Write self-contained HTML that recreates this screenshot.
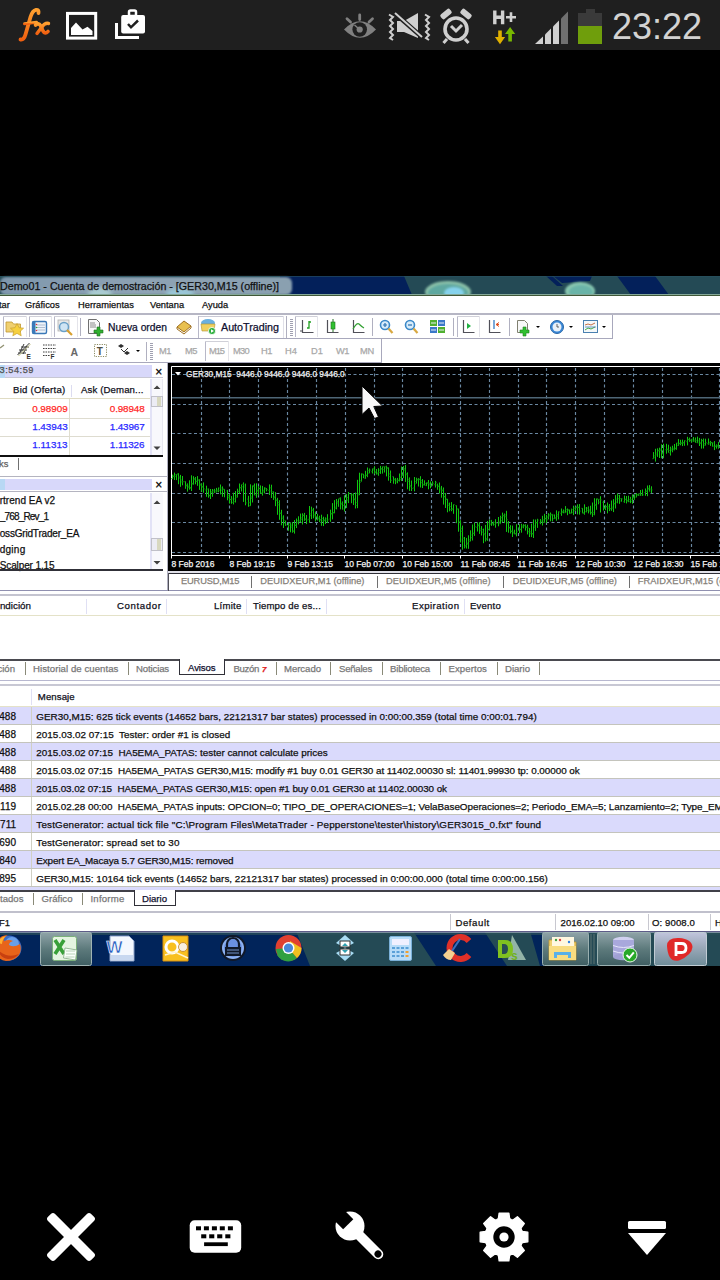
<!DOCTYPE html>
<html><head><meta charset="utf-8">
<style>
*{margin:0;padding:0;box-sizing:border-box}
html,body{width:720px;height:1280px;background:#000;overflow:hidden;font-family:"Liberation Sans",sans-serif}
.a{position:absolute}
.t{position:absolute;white-space:pre;line-height:1;-webkit-text-stroke:0.25px currentColor}
svg{position:absolute;overflow:visible}
#sb{position:absolute;left:0;top:0;width:720px;height:50px;background:#1f1f1f}
</style></head><body>
<div id="sb" class="a">
<svg width="720" height="50" style="position:absolute;left:0;top:0">
 <defs><linearGradient id="fxg" x1="0" y1="0" x2="0" y2="1"><stop offset="0" stop-color="#ffa030"/><stop offset="1" stop-color="#f06010"/></linearGradient></defs>
 <path d="M38.5 13 Q39 9.5 36 9.8 Q32.5 10.5 30.5 17 L25.5 34.5 Q24 40 20.5 39.5" fill="none" stroke="url(#fxg)" stroke-width="3.8" stroke-linecap="round"/>
 <path d="M24.5 23.8 L36.5 22.3" stroke="url(#fxg)" stroke-width="3" stroke-linecap="round"/>
 <path d="M35.5 25 Q38.5 22.5 40.5 25.5 L43 31 Q45 34.5 48 31.5" fill="none" stroke="url(#fxg)" stroke-width="3.6" stroke-linecap="round"/>
 <path d="M48.5 23.5 Q45 22.5 41.5 27.5 L37 33.5" fill="none" stroke="url(#fxg)" stroke-width="3.4" stroke-linecap="round"/>
 <rect x="67.5" y="13.4" width="28.2" height="24.7" fill="none" stroke="#fff" stroke-width="3"/>
 <path d="M71 35 L71 28 L76 22.5 L82.5 29.5 L87.5 26.8 L92.5 31 L92.5 35 Z" fill="#fff"/>
 <path d="M116.5 23 L116.5 37.5 L139 37.5" fill="none" stroke="#fff" stroke-width="3"/>
 <rect x="121.2" y="15" width="23.8" height="18.5" rx="2" fill="#fff"/>
 <rect x="129" y="10.5" width="7" height="5.5" rx="1.5" fill="none" stroke="#fff" stroke-width="2.5"/>
 <path d="M128 24 L131 27.3 L138 20.5" fill="none" stroke="#1f1f1f" stroke-width="2.5"/>
 <!-- eye -->
 <path d="M344 29.5 Q360 13 376 29.5 Q360 46 344 29.5 Z" fill="#808080"/>
 <path d="M359.7 15 V19.5 M347 18.8 L350.5 22 M372.5 18.8 L369 22" stroke="#808080" stroke-width="2.8" stroke-linecap="round"/>
 <circle cx="359.7" cy="29.5" r="7.3" fill="#1f1f1f"/>
 <circle cx="359.7" cy="29.5" r="3.1" fill="#808080"/>
 <path d="M359.7 29.5 L354.5 25" stroke="#808080" stroke-width="1.5"/>
 <!-- mute vibrate -->
 <g fill="none" stroke="#cfcfcf" stroke-width="2">
  <path d="M389 14.5 l4 2.5 l-3 3 l3 3 l-3 3 l3 3 l-3 3 l3 3 l-3 3 l3 2"/>
  <path d="M425 14.5 l4 2.5 l-3 3 l3 3 l-3 3 l3 3 l-3 3 l3 3 l-3 3 l3 2"/>
 </g>
 <path d="M397 21 L404 21 L418 13 L418 38 L404 32 L397 32 Z" fill="#cfcfcf"/>
 <path d="M394 12.5 L423 38" stroke="#1f1f1f" stroke-width="4.5"/>
 <path d="M395 13 L422 37" stroke="#cfcfcf" stroke-width="2"/>
 <!-- alarm -->
 <circle cx="456" cy="29" r="11" fill="none" stroke="#cfcfcf" stroke-width="3.6"/>
 <rect x="-6" y="-3" width="12" height="6" rx="2" fill="#cfcfcf" transform="translate(446 14) rotate(-40)"/>
 <rect x="-6" y="-3" width="12" height="6" rx="2" fill="#cfcfcf" transform="translate(466 14) rotate(40)"/>
 <path d="M451 26 L456 31 L462 25" fill="none" stroke="#cfcfcf" stroke-width="3"/>
 <path d="M447 39 l-3.5 4 M465 39 l3.5 4" stroke="#cfcfcf" stroke-width="3"/>
 <!-- H+ -->
 <path d="M494.8 10.5 V24.3 M502.6 10.5 V24.3 M494.8 17.3 H502.6" stroke="#d0d0d0" stroke-width="3.4"/>
 <path d="M506 17.2 H516 M511 12.3 V22.1" stroke="#d0d0d0" stroke-width="2.6"/>
 <path d="M498.2 30.5 h3.6 v6.5 h3.3 l-5.1 7.3 l-5.1 -7.3 h3.3z" fill="#e0b000"/>
 <path d="M508.3 41.5 h3.6 v-7.5 h3.3 l-5.1 -7 l-5.1 7 h3.3z" fill="#78b800"/>
 <!-- signal -->
 <path d="M535 44 L543 36.5 L543 44 Z" fill="#d0d0d0"/>
 <path d="M545 44 L545 34.5 L551 28.5 L551 44 Z" fill="#d0d0d0"/>
 <path d="M553 44 L553 26.5 L559 20.5 L559 44 Z" fill="#d0d0d0"/>
 <path d="M561 44 L561 18.5 L568 11.5 L568 44 Z" fill="#707070"/>
 <!-- battery -->
 <rect x="586" y="9" width="9" height="4" fill="#3a3a3a"/>
 <rect x="578" y="13" width="24" height="13" fill="#3a3a3a"/>
 <rect x="578" y="26" width="24" height="18" fill="#6f9e0c"/>
</svg>
<div class="t" style="left:612px;top:8.5px;font-size:36px;color:#d2d2d2;-webkit-text-stroke:0">23:22</div>
</div>
<div class="a" style="left:0px;top:276px;width:720px;height:690px;background:#fff;"></div>
<svg style="left:0;top:276px" width="720" height="20" viewBox="0 276 720 20">
<defs>
 <filter id="bl1" x="-50%" y="-50%" width="200%" height="200%"><feGaussianBlur stdDeviation="2"/></filter>
 <filter id="bl2" x="-50%" y="-50%" width="200%" height="200%"><feGaussianBlur stdDeviation="1"/></filter>
 <linearGradient id="tg" x1="0" y1="0" x2="1" y2="0">
  <stop offset="0" stop-color="#7f97ad"/><stop offset="0.5" stop-color="#8ea3b4"/><stop offset="1" stop-color="#8aa0b0"/>
 </linearGradient>
</defs>
<rect x="0" y="276" width="720" height="20" fill="#244a55"/>
<path d="M280 276 L404 276 L412 295 L280 295 Z" fill="#03205a"/>
<path d="M546 276 L552 276 L563 286 L557 286 Z" fill="#03205a"/>
<path d="M553 276 L592 276 L590 281 L562 283 Z" fill="#03205a"/>
<path d="M617 276 L655 276 L669 295 L631 295 Z" fill="#03205a"/>
<rect x="0" y="277" width="292" height="18" rx="6" fill="url(#tg)" filter="url(#bl2)"/>
<ellipse cx="448" cy="292" rx="23" ry="11" fill="#8ac0a8" filter="url(#bl2)"/><ellipse cx="448" cy="293" rx="20" ry="9" fill="#5ea8a0" filter="url(#bl2)"/>
<ellipse cx="454" cy="293" rx="10" ry="6" fill="#86d2ec" filter="url(#bl2)"/>
<ellipse cx="580" cy="291" rx="15" ry="9" fill="#8ac8b0" filter="url(#bl2)"/><ellipse cx="581" cy="292" rx="12" ry="7" fill="#6ab4a8" filter="url(#bl2)"/>
<ellipse cx="100" cy="294" rx="12" ry="6" fill="#b8e0e0" opacity="0.7" filter="url(#bl1)"/>
<ellipse cx="180" cy="294" rx="14" ry="6" fill="#a0d8e8" opacity="0.7" filter="url(#bl1)"/>
<rect x="0" y="276" width="720" height="1" fill="#2a5460" opacity="0.6"/>
<rect x="0" y="294" width="720" height="1" fill="#84a898"/><rect x="0" y="295" width="720" height="1" fill="#405838"/>
</svg>
<div class="t" style="left:0.0px;top:280.8px;font-size:10.69px;color:#101010;">Demo01 - Cuenta de demostración - [GER30,M15 (offline)]</div>
<div class="a" style="left:0px;top:296px;width:720px;height:18px;background:#fff;"></div>
<div class="t" style="left:-1.0px;top:300.5px;font-size:9.30px;color:#101010;">tar</div>
<div class="t" style="left:25.0px;top:300.5px;font-size:9.30px;color:#101010;">Gráficos</div>
<div class="t" style="left:78.0px;top:300.5px;font-size:9.30px;color:#101010;">Herramientas</div>
<div class="t" style="left:150.0px;top:300.5px;font-size:9.30px;color:#101010;">Ventana</div>
<div class="t" style="left:202.0px;top:300.5px;font-size:9.30px;color:#101010;">Ayuda</div>
<div class="a" style="left:0px;top:313px;width:720px;height:2px;background:#b6b6c4;"></div>
<div class="a" style="left:0px;top:338px;width:612px;height:1px;background:#a8a8bc;"></div>
<div class="a" style="left:612px;top:315px;width:1px;height:24px;background:#a8a8bc;"></div>
<div class="a" style="left:3px;top:316px;width:1px;height:21px;background:#b8b8c8;"></div>
<div class="a" style="left:3px;top:316px;width:23px;height:1px;background:#d0d0d8;"></div>
<div class="a" style="left:26px;top:316px;width:1px;height:21px;background:#e4e4ea;"></div>
<div class="a" style="left:29px;top:316px;width:1px;height:21px;background:#b8b8c8;"></div>
<div class="a" style="left:29px;top:316px;width:22px;height:1px;background:#d0d0d8;"></div>
<div class="a" style="left:51px;top:316px;width:1px;height:21px;background:#e4e4ea;"></div>
<div class="a" style="left:54px;top:316px;width:1px;height:21px;background:#b8b8c8;"></div>
<div class="a" style="left:54px;top:316px;width:23px;height:1px;background:#d0d0d8;"></div>
<div class="a" style="left:77px;top:316px;width:1px;height:21px;background:#e4e4ea;"></div>
<div class="a" style="left:295px;top:316px;width:1px;height:21px;background:#b8b8c8;"></div>
<div class="a" style="left:295px;top:316px;width:22px;height:1px;background:#d0d0d8;"></div>
<div class="a" style="left:317px;top:316px;width:1px;height:21px;background:#e4e4ea;"></div>
<div class="a" style="left:457px;top:316px;width:1px;height:21px;background:#b8b8c8;"></div>
<div class="a" style="left:457px;top:316px;width:22px;height:1px;background:#d0d0d8;"></div>
<div class="a" style="left:479px;top:316px;width:1px;height:21px;background:#e4e4ea;"></div>
<div class="a" style="left:80px;top:318px;width:1px;height:18px;background:#b0b0c0;"></div>
<div class="a" style="left:372px;top:318px;width:1px;height:18px;background:#b0b0c0;"></div>
<div class="a" style="left:453px;top:318px;width:1px;height:18px;background:#b0b0c0;"></div>
<div class="a" style="left:509px;top:318px;width:1px;height:18px;background:#b0b0c0;"></div>
<div class="a" style="left:286px;top:316px;width:1px;height:22px;background:#b0b0c0;"></div>
<div class="a" style="left:290px;top:319px;width:3px;height:1px;background:#a0a0b0;"></div>
<div class="a" style="left:290px;top:321px;width:3px;height:1px;background:#a0a0b0;"></div>
<div class="a" style="left:290px;top:323px;width:3px;height:1px;background:#a0a0b0;"></div>
<div class="a" style="left:290px;top:325px;width:3px;height:1px;background:#a0a0b0;"></div>
<div class="a" style="left:290px;top:327px;width:3px;height:1px;background:#a0a0b0;"></div>
<div class="a" style="left:290px;top:329px;width:3px;height:1px;background:#a0a0b0;"></div>
<div class="a" style="left:290px;top:331px;width:3px;height:1px;background:#a0a0b0;"></div>
<div class="a" style="left:290px;top:333px;width:3px;height:1px;background:#a0a0b0;"></div>
<div class="a" style="left:290px;top:335px;width:3px;height:1px;background:#a0a0b0;"></div>
<div class="a" style="left:198px;top:316px;width:86px;height:1px;background:#c8c8d4;"></div>
<div class="a" style="left:198px;top:316px;width:1px;height:22px;background:#b8b8c8;"></div>
<div class="a" style="left:283px;top:316px;width:1px;height:22px;background:#e0e0e8;"></div>
<div class="t" style="left:108.0px;top:322.6px;font-size:10.30px;color:#101030;">Nueva orden</div>
<div class="t" style="left:221.0px;top:322.4px;font-size:10.72px;color:#101030;">AutoTrading</div>
<svg style="left:0;top:0" width="720" height="1280">
<!-- folder star -->
<path d="M6 322 h6 l1.5 2 h7 v8 h-14.5z" fill="#f0d070" stroke="#c09830" stroke-width="0.8"/>
<path d="M17 323.5 l2 4.2 4.6 .5 -3.4 3.1 1 4.5 -4.2 -2.4 -4.2 2.4 1 -4.5 -3.4 -3.1 4.6 -.5z" fill="#f6d040" stroke="#c8a030" stroke-width="0.7"/>
<!-- market watch -->
<rect x="32.5" y="321.5" width="14" height="12" rx="1.5" fill="#eef4fa" stroke="#3a78b8" stroke-width="1.4"/>
<rect x="32.5" y="321.5" width="3" height="12" fill="#3a78b8"/>
<path d="M37 325 h8 M37 327.5 h8 M37 330 h8" stroke="#a0b0c8" stroke-width="0.8"/>
<circle cx="36.5" cy="324.5" r="0.8" fill="#e03030"/><circle cx="36.5" cy="327.5" r="0.8" fill="#30a030"/><circle cx="36.5" cy="330.5" r="0.8" fill="#e03030"/>
<!-- magnifier -->
<rect x="58" y="320" width="11" height="11" fill="#e8e8e8" stroke="#b0b0b0" stroke-width="0.8"/>
<circle cx="64" cy="327" r="4.5" fill="#cfe4f4" stroke="#6aa0c8" stroke-width="1.5"/>
<path d="M67 330 l5 5" stroke="#d8a030" stroke-width="2.2"/>
<!-- new order doc -->
<path d="M88.5 319.5 h8 l3 3 v11 h-11z" fill="#f8f8f8" stroke="#707070" stroke-width="1"/>
<path d="M90 323 h5 M90 325 h6 M90 327 h6" stroke="#707070" stroke-width="0.8"/>
<path d="M97 327 h3 v3 h3 v3 h-3 v3 h-3 v-3 h-3 v-3 h3z" fill="#30b030" stroke="#207020" stroke-width="0.6"/>
<!-- gold book -->
<path d="M177 327 l7 -6 l7 5 l-7 6z" fill="#e8c050" stroke="#a07020" stroke-width="1"/>
<path d="M177 327 l0 2 l7 5 l7 -6 v-2" fill="none" stroke="#a07020" stroke-width="1"/>
<!-- autotrading icon -->
<ellipse cx="208" cy="323" rx="7" ry="4" fill="#6ab0e0"/>
<path d="M201 324 h14 l-1 7 h-12z" fill="#f0d060" stroke="#b09030" stroke-width="0.6"/>
<circle cx="212" cy="331" r="3.6" fill="#30b040" stroke="#fff" stroke-width="0.8"/>
<path d="M211 329.3 l3 1.7 l-3 1.7z" fill="#fff"/>
<!-- bar chart -->
<path d="M302.5 320 v12.5 h11 M300 331 h3" stroke="#505058" stroke-width="1.2" fill="none"/>
<path d="M309 321 v7 h-2 M309 322 h2" stroke="#20a020" stroke-width="1.3" fill="none"/>
<!-- candle -->
<path d="M327.5 320 v12.5 h11" stroke="#505058" stroke-width="1.2" fill="none"/>
<path d="M333 319 v13" stroke="#207020" stroke-width="1"/>
<rect x="331" y="322" width="4" height="7" fill="#30c030" stroke="#207020" stroke-width="0.6"/>
<!-- line chart -->
<path d="M353.5 320 v12.5 h11" stroke="#505058" stroke-width="1.2" fill="none"/>
<path d="M353 329 q4 -7 6 -5 q3 3 5 4" stroke="#30a030" stroke-width="1.2" fill="none"/>
<!-- zoom in / out -->
<circle cx="385" cy="325" r="4.5" fill="#d8ecfa" stroke="#3a88c8" stroke-width="1.6"/>
<path d="M383 325 h4 M385 323 v4" stroke="#2a70b0" stroke-width="1.2"/>
<path d="M388.5 328.5 l4 4.5" stroke="#d8a840" stroke-width="2.2"/>
<circle cx="410" cy="325" r="4.5" fill="#d8ecfa" stroke="#3a88c8" stroke-width="1.6"/>
<path d="M408 325 h4" stroke="#2a70b0" stroke-width="1.2"/>
<path d="M413.5 328.5 l4 4.5" stroke="#d8a840" stroke-width="2.2"/>
<!-- tile -->
<rect x="430" y="320" width="7" height="6" fill="#50b030"/><rect x="438" y="320" width="7" height="6" fill="#3a78c8"/>
<rect x="430" y="327" width="7" height="6" fill="#3a78c8"/><rect x="438" y="327" width="7" height="6" fill="#50b030"/>
<path d="M431 323 h5 M439 323 h5 M431 330 h5 M439 330 h5" stroke="#e8f0f8" stroke-width="1"/>
<!-- auto scroll -->
<path d="M463.5 320 v12.5 h11" stroke="#505058" stroke-width="1.2" fill="none"/>
<path d="M467 323 l4 3 l-4 3z" fill="#20b040"/>
<!-- chart shift -->
<path d="M489.5 320 v12.5 h11" stroke="#505058" stroke-width="1.2" fill="none"/>
<path d="M494 320 v9" stroke="#2070c0" stroke-width="1.2"/>
<path d="M499 324.5 l-3 0 m3 -2 l-3 2 l3 2" stroke="#e05020" stroke-width="1" fill="none"/>
<!-- new chart -->
<path d="M517.5 320.5 h7 l3 3 v9 h-10z" fill="#f8f8f8" stroke="#808070" stroke-width="1"/>
<path d="M523 327 h3 v3 h3 v3 h-3 v3 h-3 v-3 h-3 v-3 h3z" fill="#30c030" stroke="#208020" stroke-width="0.6"/>
<path d="M536 326 h4 l-2 2z" fill="#000"/>
<!-- clock -->
<circle cx="557" cy="327" r="6.5" fill="#3a88d8" stroke="#2a68a8" stroke-width="1"/>
<circle cx="557" cy="327" r="4.5" fill="#e8f0f8"/>
<path d="M557 324 v3 h2" stroke="#404040" stroke-width="0.8" fill="none"/>
<path d="M569 326 h4 l-2 2z" fill="#000"/>
<!-- template -->
<rect x="583.5" y="320.5" width="14" height="12" fill="#f4f8fa" stroke="#4a80b0" stroke-width="1"/>
<path d="M585 325 l3 -1 l3 1 l4 -2" stroke="#c06030" stroke-width="0.9" fill="none"/>
<path d="M585 330 l3 -2 l3 1 l4 -2" stroke="#30a030" stroke-width="0.9" fill="none"/>
<path d="M585 327 h11" stroke="#4a80b0" stroke-width="0.8"/>
<path d="M602 326 h4 l-2 2z" fill="#000"/>
</svg>
<div class="a" style="left:0px;top:362px;width:381px;height:1px;background:#a8a8bc;"></div>
<div class="a" style="left:381px;top:339px;width:1px;height:24px;background:#a8a8bc;"></div>
<div class="a" style="left:146px;top:342px;width:1px;height:19px;background:#b0b0c0;"></div>
<div class="a" style="left:150px;top:343px;width:3px;height:1px;background:#a0a0b0;"></div>
<div class="a" style="left:150px;top:345px;width:3px;height:1px;background:#a0a0b0;"></div>
<div class="a" style="left:150px;top:347px;width:3px;height:1px;background:#a0a0b0;"></div>
<div class="a" style="left:150px;top:349px;width:3px;height:1px;background:#a0a0b0;"></div>
<div class="a" style="left:150px;top:351px;width:3px;height:1px;background:#a0a0b0;"></div>
<div class="a" style="left:150px;top:353px;width:3px;height:1px;background:#a0a0b0;"></div>
<div class="a" style="left:150px;top:355px;width:3px;height:1px;background:#a0a0b0;"></div>
<div class="a" style="left:150px;top:357px;width:3px;height:1px;background:#a0a0b0;"></div>
<div class="a" style="left:150px;top:359px;width:3px;height:1px;background:#a0a0b0;"></div>
<div class="a" style="left:205px;top:341px;width:1px;height:20px;background:#b8b8c8;"></div>
<div class="a" style="left:205px;top:341px;width:23px;height:1px;background:#d0d0d8;"></div>
<div class="a" style="left:228px;top:341px;width:1px;height:20px;background:#e4e4ea;"></div>
<div class="t" style="left:159.0px;top:346.5px;font-size:9.30px;color:#a8a8a8;letter-spacing:-0.460px;">M1</div>
<div class="t" style="left:185.0px;top:346.5px;font-size:9.30px;color:#a8a8a8;letter-spacing:-0.460px;">M5</div>
<div class="t" style="left:209.0px;top:346.5px;font-size:9.30px;color:#a8a8a8;letter-spacing:-1.031px;">M15</div>
<div class="t" style="left:233.0px;top:346.5px;font-size:9.30px;color:#a8a8a8;letter-spacing:-0.697px;">M30</div>
<div class="t" style="left:261.0px;top:346.5px;font-size:9.30px;color:#a8a8a8;letter-spacing:-0.444px;">H1</div>
<div class="t" style="left:285.0px;top:346.5px;font-size:9.30px;color:#a8a8a8;letter-spacing:0.056px;">H4</div>
<div class="t" style="left:311.0px;top:346.5px;font-size:9.30px;color:#a8a8a8;letter-spacing:0.056px;">D1</div>
<div class="t" style="left:336.0px;top:346.5px;font-size:9.30px;color:#a8a8a8;letter-spacing:-0.475px;">W1</div>
<div class="t" style="left:360.0px;top:346.5px;font-size:9.30px;color:#a8a8a8;letter-spacing:-0.232px;">MN</div>
<svg style="left:0;top:0" width="720" height="1280">
<path d="M0 348 l4 -3" stroke="#909070" stroke-width="1.3"/>
<path d="M17.5 355 l12 -12 M18 353 h8 M19 350 h8 M21 347 h8 M20 352 l4 -8 M23 354 l4 -8" stroke="#383838" stroke-width="1" fill="none"/><path d="M18.5 356 l12 -12" stroke="#c8c890" stroke-width="1"/>
<text x="26.5" y="358.5" font-size="6.5" font-weight="bold" fill="#303030" font-family="Liberation Sans">E</text>
<path d="M43 345 h13 M43 348.5 h13 M43 352 h13 M43 355.5 h7" stroke="#404040" stroke-width="1" stroke-dasharray="1.6 0.9"/>
<text x="50.5" y="358.5" font-size="6.5" font-weight="bold" fill="#303030" font-family="Liberation Sans">F</text>
<text x="70.5" y="356" font-size="10.5" font-weight="bold" fill="#686868" font-family="Liberation Sans">A</text>
<rect x="94.5" y="344.5" width="12" height="12" fill="none" stroke="#8a8a60" stroke-width="1" stroke-dasharray="1.2 1.2"/>
<text x="96.8" y="355" font-size="10" font-weight="bold" fill="#505040" font-family="Liberation Sans">T</text>
<path d="M118 346 l3 -2 l3 2 l-3 2z M124 353 l3 -2 l3 2 l-3 2z" fill="#303030"/>
<path d="M121 349 l3 3 l4 -4" stroke="#303030" stroke-width="1" fill="none"/>
<path d="M136 350 h4 l-2 2z" fill="#000"/>
</svg>
<div class="a" style="left:0px;top:363px;width:168px;height:228px;background:#fff;"></div>
<div class="a" style="left:167px;top:363px;width:1px;height:228px;background:#b0b0c0;"></div>
<div class="a" style="left:0px;top:365px;width:152px;height:12px;background:#d8d8fa;"></div>
<div class="a" style="left:0px;top:377px;width:163px;height:1px;background:#c8c8d4;"></div>
<div class="a" style="left:0px;top:365px;width:5px;height:13px;background:#b8d8f4;"></div>
<div class="t" style="left:-0.5px;top:365.9px;font-size:9.20px;color:#505050;letter-spacing:0.544px;">3:54:59</div>
<div class="t" style="left:155.3px;top:365.7px;font-size:12.00px;color:#000;">×</div>
<div class="a" style="left:0px;top:379px;width:163px;height:76px;background:#fff;"></div>
<div class="a" style="left:0px;top:398px;width:150px;height:1px;background:#e0dcc4;"></div>
<div class="a" style="left:69px;top:399px;width:1px;height:56px;background:#e0ded0;"></div>
<div class="a" style="left:71px;top:385px;width:1px;height:12px;background:#dcdcf0;"></div>
<div class="t" style="left:13.0px;top:384.9px;font-size:9.60px;color:#101020;letter-spacing:0.241px;">Bid (Oferta)</div>
<div class="t" style="left:81.0px;top:384.9px;font-size:9.60px;color:#101020;letter-spacing:0.130px;">Ask (Deman...</div>
<div class="t" style="left:32.2px;top:404.2px;font-size:9.90px;color:#ff2828;letter-spacing:-0.041px;">0.98909</div>
<div class="t" style="left:109.8px;top:404.2px;font-size:9.90px;color:#ff2828;letter-spacing:-0.141px;">0.98948</div>
<div class="a" style="left:0px;top:418px;width:150px;height:1px;background:#dedcd0;"></div>
<div class="t" style="left:32.2px;top:422.2px;font-size:9.90px;color:#2a2aff;letter-spacing:-0.041px;">1.43943</div>
<div class="t" style="left:109.8px;top:422.2px;font-size:9.90px;color:#2a2aff;letter-spacing:-0.141px;">1.43967</div>
<div class="a" style="left:0px;top:436px;width:150px;height:1px;background:#dedcd0;"></div>
<div class="t" style="left:32.2px;top:440.2px;font-size:9.90px;color:#2a2aff;letter-spacing:0.064px;">1.11313</div>
<div class="t" style="left:109.8px;top:440.2px;font-size:9.90px;color:#2a2aff;letter-spacing:-0.036px;">1.11326</div>
<div class="a" style="left:150px;top:379px;width:13px;height:76px;background:#f8f8fc;"></div>
<div class="a" style="left:150px;top:379px;width:2px;height:76px;background:#e2e2f6;"></div>
<div class="a" style="left:162px;top:379px;width:1px;height:76px;background:#e8e8f0;"></div>
<div class="a" style="left:151px;top:396px;width:12px;height:11px;background:#ececf4;border:1px solid #c0c0c8"></div>
<div class="a" style="left:157px;top:397px;width:4px;height:9px;background:#d8d8c0;"></div>
<div class="a" style="left:0px;top:455px;width:163px;height:1.5px;background:#101010;"></div>
<div class="t" style="left:-1.0px;top:459.8px;font-size:9.30px;color:#606060;">ks</div>
<div class="a" style="left:18px;top:458px;width:1px;height:12px;background:#707070;"></div>
<div class="a" style="left:0px;top:476px;width:168px;height:1px;background:#b4b4c0;"></div>
<div class="a" style="left:0px;top:479px;width:152px;height:11px;background:#d8d8fa;"></div>
<div class="a" style="left:0px;top:479px;width:5px;height:11px;background:#b8d8f4;"></div>
<div class="t" style="left:155.3px;top:479.2px;font-size:12.00px;color:#000;">×</div>
<div class="a" style="left:0px;top:491px;width:168px;height:1px;background:#b4b4c0;"></div>
<div class="t" style="left:-0.3px;top:496.2px;font-size:10.00px;color:#101010;letter-spacing:0.023px;">rtrend EA v2</div>
<div class="t" style="left:-0.3px;top:512.2px;font-size:10.00px;color:#101010;letter-spacing:-0.811px;">_768_Rev_1</div>
<div class="t" style="left:-0.3px;top:528.7px;font-size:10.00px;color:#101010;letter-spacing:-0.184px;">ossGridTrader_EA</div>
<div class="t" style="left:-0.3px;top:545.2px;font-size:10.00px;color:#101010;letter-spacing:0.266px;">dging</div>
<div class="t" style="left:-0.3px;top:560.7px;font-size:10.00px;color:#101010;letter-spacing:-0.112px;">Scalper 1.15</div>
<div class="a" style="left:150px;top:493px;width:13px;height:76px;background:#f8f8fc;"></div>
<div class="a" style="left:150px;top:493px;width:2px;height:76px;background:#e2e2f6;"></div>
<div class="a" style="left:151px;top:538px;width:12px;height:13px;background:#ececf4;border:1px solid #c0c0c8"></div>
<div class="a" style="left:157px;top:539px;width:4px;height:11px;background:#d8d8c0;"></div>
<div class="a" style="left:0px;top:569px;width:163px;height:1.5px;background:#303038;"></div>
<svg style="left:0;top:0" width="720" height="1280"><path d="M153.5 389 l3.5 -3.5 l3.5 3.5z M153.5 446.5 h7 l-3.5 3.5z" fill="#404040"/><path d="M153.5 504 l3.5 -3.5 l3.5 3.5z M153.5 561 h7 l-3.5 3.5z" fill="#404040"/></svg>
<div class="a" style="left:0px;top:590px;width:720px;height:1px;background:#9090b0;"></div>
<div class="a" style="left:168px;top:363px;width:552px;height:208px;background:#000;"></div>
<svg style="left:0;top:0" width="720" height="1280"><path d="M171.5 366.5 H720 M171.5 366.5 V555.5 H720" stroke="#fff" stroke-width="1" fill="none"/><path d="M201.5 368 V555 M229.5 368 V555 M258.5 368 V555 M287.5 368 V555 M316.5 368 V555 M345.5 368 V555 M374.5 368 V555 M402.5 368 V555 M431.5 368 V555 M460.5 368 V555 M489.5 368 V555 M518.5 368 V555 M546.5 368 V555 M575.5 368 V555 M604.5 368 V555 M633.5 368 V555 M662.5 368 V555 M691.5 368 V555 M719.5 368 V555 " stroke="#6a88a2" stroke-width="1.15" stroke-dasharray="3 2.5" fill="none"/><path d="M172 374.5 H720 M172 404.5 H720 M172 433.5 H720 M172 463.5 H720 M172 493.5 H720 M172 522.5 H720 M172 552.5 H720 " stroke="#6a88a2" stroke-width="1.15" stroke-dasharray="3 2.5" fill="none"/><path d="M172 397.7 H720" stroke="#4e6676" stroke-width="1.6"/><path d="M172.5 474.6 V479.1 M174.5 472.6 V480.0 M176.5 474.6 V480.1 M178.5 473.1 V484.2 M180.5 474.9 V486.8 M182.5 476.0 V485.3 M185.5 481.4 V488.8 M187.5 483.4 V491.6 M189.5 480.3 V489.6 M191.5 475.3 V491.0 M193.5 476.2 V484.6 M195.5 477.0 V484.3 M197.5 476.1 V485.8 M199.5 479.3 V489.9 M201.5 483.5 V491.7 M203.5 482.4 V492.8 M206.5 485.7 V496.8 M208.5 488.6 V497.7 M210.5 489.0 V499.0 M212.5 489.0 V496.8 M214.5 488.8 V493.0 M216.5 487.9 V492.5 M218.5 487.5 V492.2 M220.5 484.5 V494.4 M222.5 486.4 V496.8 M224.5 489.2 V497.3 M227.5 489.9 V500.3 M229.5 493.9 V503.6 M231.5 496.1 V503.8 M233.5 492.7 V504.4 M235.5 491.0 V502.5 M237.5 488.7 V497.5 M239.5 483.5 V493.8 M241.5 484.5 V491.4 M243.5 482.4 V501.9 M245.5 483.6 V505.3 M248.5 495.8 V506.8 M250.5 484.3 V505.9 M252.5 485.6 V502.5 M254.5 483.5 V495.1 M256.5 483.3 V497.8 M258.5 486.1 V495.5 M260.5 485.4 V493.3 M262.5 485.9 V495.6 M264.5 487.3 V493.4 M266.5 488.1 V491.4 M269.5 484.4 V495.0 M271.5 484.7 V498.0 M273.5 491.4 V499.9 M275.5 492.1 V506.2 M277.5 497.8 V514.8 M279.5 500.2 V519.8 M281.5 509.8 V525.3 M283.5 515.3 V528.0 M285.5 520.6 V525.9 M288.5 522.6 V530.8 M290.5 522.8 V532.3 M292.5 522.0 V532.7 M294.5 520.0 V533.6 M296.5 518.5 V528.1 M298.5 516.3 V524.4 M300.5 513.6 V522.3 M302.5 513.3 V524.5 M304.5 512.9 V520.9 M306.5 515.0 V524.1 M309.5 506.0 V522.9 M311.5 506.7 V519.1 M313.5 507.9 V518.4 M315.5 511.6 V521.5 M317.5 513.8 V520.5 M319.5 515.7 V522.1 M321.5 514.7 V525.8 M323.5 516.7 V526.1 M325.5 517.4 V524.1 M327.5 514.2 V523.0 M330.5 509.7 V521.8 M332.5 503.1 V519.4 M334.5 500.1 V513.2 M336.5 499.0 V509.4 M338.5 498.8 V506.8 M340.5 497.4 V509.4 M342.5 501.4 V509.6 M344.5 495.3 V511.5 M346.5 493.9 V508.0 M348.5 492.0 V503.1 M351.5 493.1 V503.2 M353.5 493.3 V505.0 M355.5 492.5 V508.5 M357.5 479.8 V508.2 M359.5 472.7 V495.2 M361.5 473.4 V481.6 M363.5 474.1 V478.2 M365.5 470.8 V478.8 M367.5 467.5 V477.2 M369.5 468.5 V473.1 M372.5 468.7 V473.5 M374.5 466.2 V474.2 M376.5 469.0 V474.5 M378.5 468.2 V475.8 M380.5 465.9 V473.9 M382.5 466.6 V473.6 M384.5 466.5 V472.5 M386.5 465.7 V476.4 M388.5 467.5 V480.7 M390.5 470.5 V483.0 M393.5 476.7 V483.7 M395.5 477.9 V484.2 M397.5 477.9 V483.3 M399.5 473.5 V481.5 M401.5 466.5 V481.0 M403.5 466.0 V478.2 M405.5 464.9 V481.9 M407.5 472.4 V489.3 M409.5 477.4 V490.9 M411.5 480.5 V491.0 M414.5 477.0 V491.3 M416.5 477.7 V483.6 M418.5 478.2 V486.5 M420.5 476.2 V487.5 M422.5 479.0 V488.0 M424.5 480.3 V485.3 M426.5 482.7 V486.1 M428.5 480.0 V489.3 M430.5 481.4 V488.2 M432.5 481.3 V485.7 M435.5 480.9 V487.5 M437.5 483.6 V489.8 M439.5 482.5 V493.5 M441.5 485.9 V497.7 M443.5 487.5 V504.6 M445.5 493.0 V508.0 M447.5 499.0 V512.3 M449.5 502.6 V511.3 M451.5 502.1 V511.2 M453.5 504.5 V513.8 M456.5 505.4 V523.2 M458.5 508.7 V531.7 M460.5 520.2 V542.5 M462.5 525.6 V549.7 M464.5 537.0 V548.4 M466.5 537.9 V548.6 M468.5 535.3 V548.8 M470.5 530.3 V541.4 M472.5 524.5 V540.5 M474.5 522.7 V535.9 M477.5 522.4 V531.5 M479.5 522.2 V533.9 M481.5 526.1 V535.5 M483.5 528.6 V543.2 M485.5 524.9 V541.5 M487.5 521.0 V540.9 M489.5 519.7 V529.4 M491.5 519.9 V525.9 M493.5 521.6 V525.7 M495.5 519.2 V527.7 M498.5 517.0 V526.3 M500.5 515.7 V523.6 M502.5 512.6 V522.2 M504.5 513.5 V523.1 M506.5 510.8 V531.9 M508.5 521.0 V532.7 M510.5 525.2 V533.5 M512.5 525.6 V537.0 M514.5 529.7 V534.2 M516.5 524.2 V536.4 M519.5 524.3 V533.3 M521.5 523.8 V532.7 M523.5 524.2 V528.3 M525.5 524.3 V530.6 M527.5 524.7 V534.4 M529.5 528.1 V537.0 M531.5 523.6 V537.1 M533.5 519.4 V538.0 M535.5 519.5 V530.9 M537.5 518.8 V527.9 M540.5 519.1 V524.2 M542.5 515.8 V525.5 M544.5 513.8 V522.7 M546.5 514.7 V523.1 M548.5 513.2 V519.4 M550.5 512.5 V521.3 M552.5 514.3 V521.4 M554.5 514.4 V519.0 M556.5 510.4 V520.8 M558.5 511.5 V519.4 M561.5 508.5 V515.8 M563.5 509.5 V513.3 M565.5 506.1 V512.7 M567.5 508.5 V515.2 M569.5 509.7 V513.8 M571.5 508.6 V513.4 M573.5 505.7 V515.1 M575.5 507.2 V510.7 M577.5 504.3 V514.4 M579.5 504.0 V514.6 M582.5 508.1 V513.3 M584.5 504.3 V514.7 M586.5 507.0 V512.3 M588.5 506.4 V513.4 M590.5 505.7 V514.6 M592.5 502.5 V516.9 M594.5 498.2 V515.3 M596.5 498.7 V509.8 M598.5 499.4 V504.3 M600.5 496.2 V512.5 M603.5 500.7 V510.5 M605.5 504.6 V510.2 M607.5 502.5 V513.4 M609.5 504.0 V511.1 M611.5 500.5 V510.8 M613.5 499.1 V512.1 M615.5 495.1 V508.5 M617.5 493.5 V503.3 M619.5 494.8 V503.8 M621.5 498.6 V501.7 M624.5 495.6 V502.8 M626.5 496.0 V503.4 M628.5 495.7 V502.1 M630.5 496.8 V503.1 M632.5 494.5 V503.8 M634.5 494.5 V499.9 M636.5 493.2 V497.3 M638.5 493.5 V495.9 M640.5 490.0 V495.8 M642.5 489.5 V495.9 M645.5 488.5 V495.8 M647.5 485.5 V496.2 M649.5 485.1 V491.6 M651.5 486.3 V493.2 M653.5 452.1 V458.6 M655.5 448.8 V461.6 M657.5 448.3 V456.9 M659.5 447.7 V458.0 M661.5 444.3 V458.2 M663.5 443.7 V458.2 M666.5 443.8 V453.7 M668.5 444.7 V452.7 M670.5 446.7 V455.5 M672.5 445.7 V452.3 M674.5 444.0 V450.3 M676.5 442.9 V449.8 M678.5 439.1 V446.0 M680.5 439.8 V445.3 M682.5 439.6 V446.1 M684.5 440.3 V445.8 M687.5 436.8 V445.4 M689.5 437.6 V441.8 M691.5 439.1 V442.6 M693.5 437.0 V441.8 M695.5 437.5 V442.7 M697.5 436.6 V443.0 M699.5 437.9 V446.0 M701.5 438.8 V448.6 M703.5 438.5 V448.5 M705.5 438.7 V445.4 M708.5 438.5 V444.7 M710.5 440.9 V445.9 M712.5 442.7 V446.6 M714.5 441.1 V450.1 M716.5 444.4 V448.6 M718.5 442.0 V448.7 M720.5 445.1 V450.5 " stroke="#10c810" stroke-width="1" fill="none"/><path d="M171.5 478.6 h1 M172.5 476.3 h1 M173.5 476.2 h1 M174.5 476.5 h1 M175.5 474.7 h1 M176.5 474.6 h1 M177.5 473.7 h1 M178.5 476.8 h1 M179.5 478.2 h1 M180.5 480.0 h1 M181.5 481.8 h1 M182.5 481.7 h1 M184.5 481.7 h1 M185.5 485.9 h1 M186.5 485.2 h1 M187.5 487.3 h1 M188.5 486.1 h1 M189.5 487.6 h1 M190.5 488.1 h1 M191.5 483.3 h1 M192.5 484.1 h1 M193.5 479.3 h1 M194.5 478.6 h1 M195.5 481.1 h1 M196.5 481.5 h1 M197.5 480.0 h1 M198.5 480.1 h1 M199.5 484.1 h1 M200.5 485.2 h1 M201.5 486.7 h1 M202.5 487.2 h1 M203.5 488.9 h1 M205.5 489.9 h1 M206.5 492.8 h1 M207.5 489.2 h1 M208.5 495.3 h1 M209.5 495.8 h1 M210.5 492.8 h1 M211.5 491.7 h1 M212.5 491.9 h1 M213.5 490.3 h1 M214.5 492.1 h1 M215.5 490.6 h1 M216.5 491.4 h1 M217.5 490.1 h1 M218.5 490.4 h1 M219.5 488.0 h1 M220.5 488.0 h1 M221.5 490.1 h1 M222.5 489.0 h1 M223.5 489.3 h1 M224.5 492.7 h1 M226.5 490.8 h1 M227.5 495.6 h1 M228.5 497.7 h1 M229.5 499.5 h1 M230.5 499.4 h1 M231.5 499.0 h1 M232.5 502.3 h1 M233.5 501.6 h1 M234.5 498.8 h1 M235.5 497.3 h1 M236.5 495.6 h1 M237.5 491.7 h1 M238.5 491.1 h1 M239.5 488.0 h1 M240.5 487.5 h1 M241.5 486.9 h1 M242.5 484.4 h1 M243.5 485.0 h1 M244.5 487.0 h1 M245.5 502.8 h1 M247.5 499.2 h1 M248.5 502.7 h1 M249.5 505.6 h1 M250.5 496.8 h1 M251.5 498.3 h1 M252.5 485.6 h1 M253.5 486.3 h1 M254.5 495.1 h1 M255.5 493.5 h1 M256.5 490.5 h1 M257.5 491.1 h1 M258.5 488.4 h1 M259.5 488.5 h1 M260.5 493.3 h1 M261.5 493.2 h1 M262.5 491.8 h1 M263.5 490.3 h1 M264.5 487.9 h1 M265.5 488.8 h1 M266.5 489.5 h1 M268.5 490.5 h1 M269.5 491.0 h1 M270.5 487.9 h1 M271.5 491.6 h1 M272.5 493.2 h1 M273.5 497.6 h1 M274.5 496.6 h1 M275.5 499.8 h1 M276.5 500.3 h1 M277.5 504.9 h1 M278.5 502.5 h1 M279.5 512.8 h1 M280.5 513.5 h1 M281.5 517.0 h1 M282.5 518.3 h1 M283.5 520.3 h1 M284.5 523.2 h1 M285.5 524.9 h1 M287.5 525.6 h1 M288.5 525.4 h1 M289.5 523.3 h1 M290.5 525.1 h1 M291.5 527.1 h1 M292.5 531.4 h1 M293.5 530.9 h1 M294.5 525.2 h1 M295.5 525.4 h1 M296.5 522.5 h1 M297.5 520.7 h1 M298.5 521.6 h1 M299.5 520.3 h1 M300.5 519.5 h1 M301.5 517.9 h1 M302.5 515.6 h1 M303.5 515.2 h1 M304.5 519.1 h1 M305.5 519.1 h1 M306.5 520.0 h1 M308.5 519.4 h1 M309.5 515.6 h1 M310.5 513.9 h1 M311.5 509.6 h1 M312.5 510.5 h1 M313.5 514.3 h1 M314.5 515.9 h1 M315.5 516.6 h1 M316.5 516.8 h1 M317.5 518.8 h1 M318.5 517.9 h1 M319.5 519.8 h1 M320.5 519.8 h1 M321.5 518.5 h1 M322.5 520.8 h1 M323.5 520.3 h1 M324.5 520.1 h1 M325.5 518.8 h1 M326.5 520.9 h1 M327.5 520.0 h1 M329.5 519.0 h1 M330.5 513.6 h1 M331.5 513.9 h1 M332.5 512.6 h1 M333.5 512.8 h1 M334.5 508.5 h1 M335.5 507.2 h1 M336.5 501.6 h1 M337.5 503.1 h1 M338.5 498.8 h1 M339.5 498.2 h1 M340.5 504.3 h1 M341.5 503.3 h1 M342.5 509.0 h1 M343.5 505.5 h1 M344.5 503.5 h1 M345.5 503.5 h1 M346.5 497.5 h1 M347.5 500.2 h1 M348.5 493.6 h1 M350.5 494.9 h1 M351.5 495.0 h1 M352.5 494.9 h1 M353.5 498.8 h1 M354.5 499.6 h1 M355.5 505.5 h1 M356.5 502.5 h1 M357.5 494.8 h1 M358.5 493.5 h1 M359.5 482.3 h1 M360.5 480.7 h1 M361.5 474.0 h1 M362.5 474.1 h1 M363.5 475.9 h1 M364.5 478.1 h1 M365.5 475.2 h1 M366.5 475.4 h1 M367.5 470.6 h1 M368.5 473.1 h1 M369.5 470.2 h1 M371.5 471.7 h1 M372.5 468.7 h1 M373.5 470.0 h1 M374.5 472.4 h1 M375.5 471.8 h1 M376.5 473.9 h1 M377.5 472.8 h1 M378.5 472.5 h1 M379.5 470.2 h1 M380.5 468.6 h1 M381.5 469.1 h1 M382.5 466.7 h1 M383.5 469.5 h1 M384.5 468.0 h1 M385.5 466.5 h1 M386.5 468.4 h1 M387.5 467.7 h1 M388.5 476.7 h1 M389.5 473.9 h1 M390.5 480.3 h1 M392.5 476.7 h1 M393.5 479.9 h1 M394.5 479.1 h1 M395.5 481.8 h1 M396.5 480.1 h1 M397.5 480.5 h1 M398.5 480.1 h1 M399.5 477.3 h1 M400.5 479.4 h1 M401.5 474.8 h1 M402.5 473.8 h1 M403.5 468.6 h1 M404.5 470.2 h1 M405.5 473.6 h1 M406.5 474.6 h1 M407.5 481.3 h1 M408.5 479.4 h1 M409.5 485.5 h1 M410.5 486.7 h1 M411.5 488.5 h1 M413.5 487.9 h1 M414.5 483.8 h1 M415.5 481.5 h1 M416.5 479.3 h1 M417.5 480.1 h1 M418.5 479.7 h1 M419.5 479.1 h1 M420.5 480.7 h1 M421.5 482.7 h1 M422.5 484.4 h1 M423.5 485.2 h1 M424.5 483.5 h1 M425.5 485.4 h1 M426.5 482.7 h1 M427.5 483.4 h1 M428.5 483.3 h1 M429.5 484.9 h1 M430.5 485.4 h1 M431.5 483.5 h1 M432.5 483.4 h1 M434.5 484.7 h1 M435.5 482.4 h1 M436.5 485.0 h1 M437.5 486.5 h1 M438.5 485.8 h1 M439.5 488.1 h1 M440.5 489.8 h1 M441.5 490.7 h1 M442.5 489.9 h1 M443.5 496.6 h1 M444.5 496.6 h1 M445.5 499.4 h1 M446.5 499.2 h1 M447.5 504.0 h1 M448.5 505.5 h1 M449.5 506.5 h1 M450.5 509.5 h1 M451.5 509.5 h1 M452.5 508.6 h1 M453.5 504.5 h1 M455.5 505.7 h1 M456.5 509.0 h1 M457.5 509.0 h1 M458.5 522.1 h1 M459.5 522.1 h1 M460.5 528.3 h1 M461.5 531.4 h1 M462.5 538.2 h1 M463.5 541.0 h1 M464.5 546.7 h1 M465.5 545.5 h1 M466.5 543.2 h1 M467.5 544.1 h1 M468.5 541.5 h1 M469.5 539.8 h1 M470.5 535.0 h1 M471.5 537.7 h1 M472.5 533.0 h1 M473.5 533.5 h1 M474.5 526.7 h1 M476.5 527.4 h1 M477.5 525.6 h1 M478.5 524.9 h1 M479.5 529.0 h1 M480.5 530.7 h1 M481.5 529.7 h1 M482.5 532.2 h1 M483.5 533.5 h1 M484.5 534.7 h1 M485.5 539.3 h1 M486.5 538.6 h1 M487.5 529.6 h1 M488.5 529.4 h1 M489.5 524.1 h1 M490.5 520.9 h1 M491.5 523.2 h1 M492.5 523.8 h1 M493.5 522.5 h1 M494.5 524.5 h1 M495.5 523.4 h1 M497.5 523.2 h1 M498.5 521.4 h1 M499.5 523.6 h1 M500.5 517.7 h1 M501.5 520.7 h1 M502.5 515.3 h1 M503.5 516.0 h1 M504.5 514.9 h1 M505.5 516.6 h1 M506.5 519.7 h1 M507.5 523.2 h1 M508.5 527.9 h1 M509.5 527.6 h1 M510.5 531.1 h1 M511.5 531.3 h1 M512.5 532.0 h1 M513.5 533.1 h1 M514.5 533.8 h1 M515.5 533.6 h1 M516.5 531.7 h1 M518.5 528.8 h1 M519.5 529.6 h1 M520.5 529.1 h1 M521.5 525.8 h1 M522.5 527.1 h1 M523.5 526.0 h1 M524.5 525.3 h1 M525.5 527.1 h1 M526.5 527.2 h1 M527.5 527.8 h1 M528.5 531.6 h1 M529.5 533.6 h1 M530.5 531.9 h1 M531.5 533.7 h1 M532.5 533.9 h1 M533.5 525.8 h1 M534.5 527.3 h1 M535.5 522.7 h1 M536.5 522.6 h1 M537.5 520.1 h1 M539.5 522.7 h1 M540.5 520.8 h1 M541.5 522.0 h1 M542.5 519.8 h1 M543.5 522.2 h1 M544.5 518.5 h1 M545.5 518.7 h1 M546.5 519.9 h1 M547.5 517.0 h1 M548.5 515.8 h1 M549.5 514.7 h1 M550.5 515.2 h1 M551.5 514.3 h1 M552.5 515.2 h1 M553.5 518.6 h1 M554.5 517.8 h1 M555.5 518.0 h1 M556.5 514.5 h1 M557.5 516.1 h1 M558.5 511.9 h1 M560.5 513.3 h1 M561.5 512.1 h1 M562.5 511.9 h1 M563.5 511.1 h1 M564.5 512.7 h1 M565.5 509.5 h1 M566.5 511.9 h1 M567.5 510.1 h1 M568.5 509.9 h1 M569.5 513.1 h1 M570.5 513.0 h1 M571.5 509.5 h1 M572.5 512.4 h1 M573.5 508.1 h1 M574.5 510.7 h1 M575.5 507.2 h1 M576.5 507.2 h1 M577.5 507.4 h1 M578.5 507.3 h1 M579.5 511.1 h1 M581.5 508.3 h1 M582.5 512.7 h1 M583.5 513.4 h1 M584.5 508.0 h1 M585.5 511.7 h1 M586.5 510.3 h1 M587.5 508.2 h1 M588.5 509.8 h1 M589.5 511.1 h1 M590.5 512.9 h1 M591.5 512.3 h1 M592.5 512.6 h1 M593.5 514.5 h1 M594.5 504.6 h1 M595.5 505.3 h1 M596.5 498.7 h1 M597.5 499.4 h1 M598.5 502.1 h1 M599.5 499.3 h1 M600.5 499.9 h1 M602.5 502.4 h1 M603.5 507.8 h1 M604.5 508.5 h1 M605.5 506.7 h1 M606.5 506.7 h1 M607.5 506.3 h1 M608.5 508.1 h1 M609.5 509.0 h1 M610.5 508.5 h1 M611.5 507.0 h1 M612.5 508.4 h1 M613.5 503.3 h1 M614.5 504.0 h1 M615.5 499.1 h1 M616.5 502.1 h1 M617.5 495.6 h1 M618.5 498.6 h1 M619.5 501.0 h1 M620.5 498.6 h1 M621.5 498.8 h1 M623.5 501.7 h1 M624.5 499.5 h1 M625.5 499.0 h1 M626.5 501.1 h1 M627.5 500.4 h1 M628.5 501.6 h1 M629.5 499.7 h1 M630.5 499.7 h1 M631.5 501.5 h1 M632.5 496.9 h1 M633.5 498.8 h1 M634.5 494.7 h1 M635.5 497.2 h1 M636.5 495.2 h1 M637.5 494.6 h1 M638.5 495.1 h1 M639.5 493.6 h1 M640.5 495.0 h1 M641.5 493.5 h1 M642.5 494.9 h1 M644.5 492.5 h1 M645.5 491.3 h1 M646.5 491.1 h1 M647.5 489.1 h1 M648.5 488.3 h1 M649.5 491.0 h1 M650.5 489.1 h1 M651.5 490.0 h1 M652.5 458.6 h1 M653.5 457.6 h1 M654.5 455.8 h1 M655.5 454.9 h1 M656.5 453.0 h1 M657.5 451.0 h1 M658.5 450.3 h1 M659.5 450.3 h1 M660.5 449.1 h1 M661.5 452.3 h1 M662.5 453.8 h1 M663.5 446.2 h1 M665.5 449.6 h1 M666.5 449.0 h1 M667.5 449.6 h1 M668.5 450.5 h1 M669.5 452.9 h1 M670.5 448.9 h1 M671.5 450.3 h1 M672.5 448.3 h1 M673.5 449.7 h1 M674.5 448.7 h1 M675.5 448.1 h1 M676.5 443.2 h1 M677.5 445.4 h1 M678.5 443.8 h1 M679.5 443.3 h1 M680.5 443.3 h1 M681.5 442.8 h1 M682.5 442.6 h1 M683.5 442.8 h1 M684.5 440.7 h1 M686.5 441.6 h1 M687.5 439.6 h1 M688.5 439.4 h1 M689.5 440.1 h1 M690.5 440.4 h1 M691.5 439.1 h1 M692.5 440.9 h1 M693.5 441.1 h1 M694.5 440.0 h1 M695.5 440.5 h1 M696.5 442.4 h1 M697.5 443.0 h1 M698.5 440.8 h1 M699.5 443.2 h1 M700.5 443.0 h1 M701.5 440.9 h1 M702.5 440.5 h1 M703.5 443.7 h1 M704.5 445.4 h1 M705.5 442.7 h1 M707.5 443.6 h1 M708.5 443.9 h1 M709.5 442.3 h1 M710.5 442.6 h1 M711.5 442.7 h1 M712.5 446.1 h1 M713.5 443.0 h1 M714.5 446.5 h1 M715.5 445.9 h1 M716.5 445.4 h1 M717.5 446.3 h1 M718.5 447.5 h1 M719.5 446.5 h1 M720.5 445.6 h1 " stroke="#0a900a" stroke-width="1.2" fill="none"/><path d="M171.5 555 V558.5 M229.5 555 V558.5 M287.5 555 V558.5 M344.5 555 V558.5 M402.5 555 V558.5 M460.5 555 V558.5 M517.5 555 V558.5 M575.5 555 V558.5 M633.5 555 V558.5 M690.5 555 V558.5 " stroke="#fff" stroke-width="1"/><path d="M175 372 h6 l-3 3.5z" fill="#fff"/></svg>
<div class="t" style="left:186.0px;top:369.5px;font-size:8.31px;color:#f0f0f0;">GER30,M15  9446.0 9446.0 9446.0 9446.0</div>
<div class="t" style="left:171.5px;top:559.7px;font-size:8.50px;color:#f4f4f4;">8 Feb 2016</div>
<div class="t" style="left:229.5px;top:559.7px;font-size:8.50px;color:#f4f4f4;">8 Feb 19:15</div>
<div class="t" style="left:287.5px;top:559.7px;font-size:8.50px;color:#f4f4f4;">9 Feb 13:15</div>
<div class="t" style="left:344.5px;top:559.7px;font-size:8.50px;color:#f4f4f4;">10 Feb 07:00</div>
<div class="t" style="left:402.5px;top:559.7px;font-size:8.50px;color:#f4f4f4;">10 Feb 15:00</div>
<div class="t" style="left:460.5px;top:559.7px;font-size:8.50px;color:#f4f4f4;">11 Feb 08:45</div>
<div class="t" style="left:517.5px;top:559.7px;font-size:8.50px;color:#f4f4f4;">11 Feb 16:45</div>
<div class="t" style="left:575.5px;top:559.7px;font-size:8.50px;color:#f4f4f4;">12 Feb 10:30</div>
<div class="t" style="left:633.5px;top:559.7px;font-size:8.50px;color:#f4f4f4;">12 Feb 18:30</div>
<div class="t" style="left:690.5px;top:559.7px;font-size:8.50px;color:#f4f4f4;">15 Feb 12:15</div>
<div class="a" style="left:168px;top:571px;width:552px;height:19px;background:#fff;"></div>
<div class="a" style="left:168px;top:571px;width:552px;height:1.5px;background:#e0e0e8;"></div>
<div class="a" style="left:168px;top:573px;width:552px;height:1px;background:#303038;"></div>
<div class="a" style="left:168px;top:573px;width:1px;height:18px;background:#505058;"></div>
<div class="t" style="left:181.0px;top:577.0px;font-size:9.30px;color:#858078;letter-spacing:-0.155px;">EURUSD,M15</div>
<div class="t" style="left:260.3px;top:577.0px;font-size:9.30px;color:#858078;letter-spacing:0.023px;">DEUIDXEUR,M1 (offline)</div>
<div class="t" style="left:386.0px;top:577.0px;font-size:9.30px;color:#858078;letter-spacing:0.041px;">DEUIDXEUR,M5 (offline)</div>
<div class="t" style="left:512.8px;top:577.0px;font-size:9.30px;color:#858078;letter-spacing:0.023px;">DEUIDXEUR,M5 (offline)</div>
<div class="t" style="left:637.7px;top:577.0px;font-size:9.30px;color:#858078;letter-spacing:0.094px;">FRAIDXEUR,M15 (offline)</div>
<div class="a" style="left:251px;top:576px;width:1px;height:12px;background:#707070;"></div>
<div class="a" style="left:377px;top:576px;width:1px;height:12px;background:#707070;"></div>
<div class="a" style="left:503px;top:576px;width:1px;height:12px;background:#707070;"></div>
<div class="a" style="left:629px;top:576px;width:1px;height:12px;background:#707070;"></div>
<div class="a" style="left:0px;top:594px;width:720px;height:2px;background:#c4c4d0;"></div>
<div class="a" style="left:0px;top:596px;width:720px;height:335px;background:#fff;"></div>
<div class="a" style="left:0px;top:594px;width:720px;height:2px;background:#c4c4d0;"></div>
<div class="t" style="left:-0.1px;top:601.3px;font-size:9.80px;color:#101020;">ndición</div>
<div class="t" style="left:117.0px;top:601.4px;font-size:9.60px;color:#101020;letter-spacing:0.626px;">Contador</div>
<div class="t" style="left:214.0px;top:601.4px;font-size:9.60px;color:#101020;letter-spacing:0.226px;">Límite</div>
<div class="t" style="left:253.0px;top:601.4px;font-size:9.60px;color:#101020;letter-spacing:0.146px;">Tiempo de es...</div>
<div class="t" style="left:412.0px;top:601.4px;font-size:9.60px;color:#101020;letter-spacing:0.481px;">Expiration</div>
<div class="t" style="left:470.0px;top:601.4px;font-size:9.60px;color:#101020;letter-spacing:0.185px;">Evento</div>
<div class="a" style="left:86px;top:599px;width:1px;height:15px;background:#e0e0f4;"></div>
<div class="a" style="left:166px;top:599px;width:1px;height:15px;background:#e0e0f4;"></div>
<div class="a" style="left:246px;top:599px;width:1px;height:15px;background:#e0e0f4;"></div>
<div class="a" style="left:326px;top:599px;width:1px;height:15px;background:#e0e0f4;"></div>
<div class="a" style="left:464px;top:599px;width:1px;height:15px;background:#e0e0f4;"></div>
<div class="a" style="left:0px;top:615px;width:720px;height:1px;background:#e4e2c8;"></div>
<div class="a" style="left:0px;top:659px;width:720px;height:1.5px;background:#4a4a50;"></div>
<div class="a" style="left:179px;top:659px;width:46px;height:16px;background:#fff;border-left:1.5px solid #303038;border-right:1.5px solid #303038;border-bottom:1.5px solid #303038"></div>
<div class="t" style="left:-2.6px;top:663.9px;font-size:9.60px;color:#787878;">ción</div>
<div class="t" style="left:33.0px;top:663.9px;font-size:9.60px;color:#787878;letter-spacing:0.060px;">Historial de cuentas</div>
<div class="t" style="left:136.0px;top:663.9px;font-size:9.60px;color:#787878;letter-spacing:-0.143px;">Noticias</div>
<div class="t" style="left:188.0px;top:663.2px;font-size:9.60px;color:#101030;letter-spacing:-0.100px;">Avisos</div>
<div class="t" style="left:233.5px;top:663.9px;font-size:9.60px;color:#787878;letter-spacing:-0.344px;">Buzón</div>
<div class="t" style="left:284.0px;top:663.9px;font-size:9.60px;color:#787878;letter-spacing:-0.050px;">Mercado</div>
<div class="t" style="left:339.0px;top:663.9px;font-size:9.60px;color:#787878;letter-spacing:-0.242px;">Señales</div>
<div class="t" style="left:390.0px;top:663.9px;font-size:9.60px;color:#787878;letter-spacing:-0.163px;">Biblioteca</div>
<div class="t" style="left:448.5px;top:663.9px;font-size:9.60px;color:#787878;letter-spacing:0.077px;">Expertos</div>
<div class="t" style="left:505.0px;top:663.9px;font-size:9.60px;color:#787878;letter-spacing:-0.012px;">Diario</div>
<div class="t" style="left:262.0px;top:665.9px;font-size:8.00px;color:#e02020;font-weight:bold;font-style:italic;">7</div>
<div class="a" style="left:25px;top:662px;width:1px;height:13px;background:#8a8a78;"></div>
<div class="a" style="left:128px;top:662px;width:1px;height:13px;background:#8a8a78;"></div>
<div class="a" style="left:276px;top:662px;width:1px;height:13px;background:#8a8a78;"></div>
<div class="a" style="left:330px;top:662px;width:1px;height:13px;background:#8a8a78;"></div>
<div class="a" style="left:382px;top:662px;width:1px;height:13px;background:#8a8a78;"></div>
<div class="a" style="left:440px;top:662px;width:1px;height:13px;background:#8a8a78;"></div>
<div class="a" style="left:497px;top:662px;width:1px;height:13px;background:#8a8a78;"></div>
<div class="a" style="left:539px;top:662px;width:1px;height:13px;background:#8a8a78;"></div>
<div class="a" style="left:0px;top:680px;width:720px;height:1px;background:#b8b8d0;"></div>
<div class="a" style="left:0px;top:684px;width:720px;height:1.5px;background:#c8c8d4;"></div>
<div class="a" style="left:31px;top:689px;width:1px;height:16px;background:#e0e0f4;"></div>
<div class="t" style="left:37.8px;top:692.1px;font-size:9.60px;color:#101020;letter-spacing:0.102px;">Mensaje</div>
<div class="a" style="left:0px;top:706px;width:720px;height:1px;background:#e4e2c8;"></div>
<div class="a" style="left:0px;top:707px;width:720px;height:17px;background:#dadafc;"></div>
<div class="a" style="left:0px;top:724px;width:720px;height:1px;background:#c4c4bc;"></div>
<div class="a" style="left:31px;top:707px;width:1px;height:17px;background:#d0d0c4;"></div>
<div class="t" style="left:-0.7px;top:711.5px;font-size:10.00px;color:#101010;">488</div>
<div class="t" style="left:36.3px;top:711.5px;font-size:9.90px;color:#101010;letter-spacing:0.023px;">GER30,M15: 625 tick events (14652 bars, 22121317 bar states) processed in 0:00:00.359 (total time 0:00:01.794)</div>
<div class="a" style="left:0px;top:725px;width:720px;height:17px;background:#fff;"></div>
<div class="a" style="left:0px;top:742px;width:720px;height:1px;background:#c4c4bc;"></div>
<div class="a" style="left:31px;top:725px;width:1px;height:17px;background:#d0d0c4;"></div>
<div class="t" style="left:-0.7px;top:729.5px;font-size:10.00px;color:#101010;">488</div>
<div class="t" style="left:36.3px;top:729.5px;font-size:9.90px;color:#101010;letter-spacing:0.032px;">2015.03.02 07:15  Tester: order #1 is closed</div>
<div class="a" style="left:0px;top:743px;width:720px;height:17px;background:#dadafc;"></div>
<div class="a" style="left:0px;top:760px;width:720px;height:1px;background:#c4c4bc;"></div>
<div class="a" style="left:31px;top:743px;width:1px;height:17px;background:#d0d0c4;"></div>
<div class="t" style="left:-0.7px;top:747.5px;font-size:10.00px;color:#101010;">488</div>
<div class="t" style="left:36.3px;top:747.5px;font-size:9.90px;color:#101010;letter-spacing:-0.012px;">2015.03.02 07:15  HA5EMA_PATAS: tester cannot calculate prices</div>
<div class="a" style="left:0px;top:761px;width:720px;height:17px;background:#fff;"></div>
<div class="a" style="left:0px;top:778px;width:720px;height:1px;background:#c4c4bc;"></div>
<div class="a" style="left:31px;top:761px;width:1px;height:17px;background:#d0d0c4;"></div>
<div class="t" style="left:-0.7px;top:765.5px;font-size:10.00px;color:#101010;">488</div>
<div class="t" style="left:36.3px;top:765.5px;font-size:9.90px;color:#101010;letter-spacing:-0.042px;">2015.03.02 07:15  HA5EMA_PATAS GER30,M15: modify #1 buy 0.01 GER30 at 11402.00030 sl: 11401.99930 tp: 0.00000 ok</div>
<div class="a" style="left:0px;top:779px;width:720px;height:17px;background:#dadafc;"></div>
<div class="a" style="left:0px;top:796px;width:720px;height:1px;background:#c4c4bc;"></div>
<div class="a" style="left:31px;top:779px;width:1px;height:17px;background:#d0d0c4;"></div>
<div class="t" style="left:-0.7px;top:783.5px;font-size:10.00px;color:#101010;">488</div>
<div class="t" style="left:36.3px;top:783.5px;font-size:9.90px;color:#101010;letter-spacing:-0.071px;">2015.03.02 07:15  HA5EMA_PATAS GER30,M15: open #1 buy 0.01 GER30 at 11402.00030 ok</div>
<div class="a" style="left:0px;top:797px;width:720px;height:17px;background:#fff;"></div>
<div class="a" style="left:0px;top:814px;width:720px;height:1px;background:#c4c4bc;"></div>
<div class="a" style="left:31px;top:797px;width:1px;height:17px;background:#d0d0c4;"></div>
<div class="t" style="left:0.1px;top:801.5px;font-size:10.00px;color:#101010;">119</div>
<div class="t" style="left:36.3px;top:801.5px;font-size:9.90px;color:#101010;letter-spacing:-0.048px;">2015.02.28 00:00  HA5EMA_PATAS inputs: OPCION=0; TIPO_DE_OPERACIONES=1; VelaBaseOperaciones=2; Periodo_EMA=5; Lanzamiento=2; Type_EMA=1;</div>
<div class="a" style="left:0px;top:815px;width:720px;height:17px;background:#dadafc;"></div>
<div class="a" style="left:0px;top:832px;width:720px;height:1px;background:#c4c4bc;"></div>
<div class="a" style="left:31px;top:815px;width:1px;height:17px;background:#d0d0c4;"></div>
<div class="t" style="left:0.1px;top:819.5px;font-size:10.00px;color:#101010;">711</div>
<div class="t" style="left:36.3px;top:819.5px;font-size:9.90px;color:#101010;letter-spacing:0.169px;">TestGenerator: actual tick file &quot;C:\Program Files\MetaTrader - Pepperstone\tester\history\GER3015_0.fxt&quot; found</div>
<div class="a" style="left:0px;top:833px;width:720px;height:17px;background:#fff;"></div>
<div class="a" style="left:0px;top:850px;width:720px;height:1px;background:#c4c4bc;"></div>
<div class="a" style="left:31px;top:833px;width:1px;height:17px;background:#d0d0c4;"></div>
<div class="t" style="left:-0.7px;top:837.5px;font-size:10.00px;color:#101010;">690</div>
<div class="t" style="left:36.3px;top:837.5px;font-size:9.90px;color:#101010;letter-spacing:0.144px;">TestGenerator: spread set to 30</div>
<div class="a" style="left:0px;top:851px;width:720px;height:17px;background:#dadafc;"></div>
<div class="a" style="left:0px;top:868px;width:720px;height:1px;background:#c4c4bc;"></div>
<div class="a" style="left:31px;top:851px;width:1px;height:17px;background:#d0d0c4;"></div>
<div class="t" style="left:-0.7px;top:855.5px;font-size:10.00px;color:#101010;">840</div>
<div class="t" style="left:36.3px;top:855.5px;font-size:9.90px;color:#101010;letter-spacing:-0.123px;">Expert EA_Macaya 5.7 GER30,M15: removed</div>
<div class="a" style="left:0px;top:869px;width:720px;height:17px;background:#fff;"></div>
<div class="a" style="left:0px;top:886px;width:720px;height:1px;background:#c4c4bc;"></div>
<div class="a" style="left:31px;top:869px;width:1px;height:17px;background:#d0d0c4;"></div>
<div class="t" style="left:-0.7px;top:873.5px;font-size:10.00px;color:#101010;">895</div>
<div class="t" style="left:36.3px;top:873.5px;font-size:9.90px;color:#101010;letter-spacing:0.023px;">GER30,M15: 10164 tick events (14652 bars, 22121317 bar states) processed in 0:00:00.000 (total time 0:00:00.156)</div>
<div class="a" style="left:0px;top:887px;width:720px;height:3px;background:#dadafc;"></div>
<div class="a" style="left:0px;top:890px;width:720px;height:1.5px;background:#404048;"></div>
<div class="a" style="left:134px;top:890px;width:42px;height:16px;background:#fff;border-left:1.5px solid #303038;border-right:1.5px solid #303038;border-bottom:1.5px solid #303038"></div>
<div class="t" style="left:0.0px;top:894.4px;font-size:9.60px;color:#787878;">tados</div>
<div class="t" style="left:41.5px;top:894.4px;font-size:9.60px;color:#787878;letter-spacing:0.008px;">Gráfico</div>
<div class="t" style="left:90.5px;top:894.4px;font-size:9.60px;color:#787878;letter-spacing:0.208px;">Informe</div>
<div class="t" style="left:142.0px;top:894.4px;font-size:9.60px;color:#101030;letter-spacing:-0.012px;">Diario</div>
<div class="a" style="left:33px;top:893px;width:1px;height:12px;background:#8a8a78;"></div>
<div class="a" style="left:82px;top:893px;width:1px;height:12px;background:#8a8a78;"></div>
<div class="a" style="left:0px;top:911px;width:720px;height:1.5px;background:#c0c0cc;"></div>
<div class="t" style="left:-1.0px;top:918.3px;font-size:9.40px;color:#101010;">F1</div>
<div class="a" style="left:450px;top:914px;width:1px;height:16px;background:#c8c8d0;"></div>
<div class="a" style="left:555px;top:914px;width:1px;height:16px;background:#c8c8d0;"></div>
<div class="a" style="left:648px;top:914px;width:1px;height:16px;background:#c8c8d0;"></div>
<div class="a" style="left:710px;top:914px;width:1px;height:16px;background:#c8c8d0;"></div>
<div class="t" style="left:455.5px;top:918.2px;font-size:9.60px;color:#101010;letter-spacing:0.555px;">Default</div>
<div class="t" style="left:560.6px;top:918.2px;font-size:9.60px;color:#101010;letter-spacing:-0.046px;">2016.02.10 09:00</div>
<div class="t" style="left:652.0px;top:918.2px;font-size:9.60px;color:#101010;letter-spacing:0.093px;">O: 9008.0</div>
<div class="t" style="left:715.0px;top:918.3px;font-size:9.40px;color:#101010;">H</div>
<svg style="left:0;top:0" width="720" height="1280">
<defs>
 <linearGradient id="btn" x1="0" y1="0" x2="0" y2="1"><stop offset="0" stop-color="#8fa3a8"/><stop offset="0.5" stop-color="#5d7a7c"/><stop offset="1" stop-color="#3f5e62"/></linearGradient>
 <linearGradient id="btn2" x1="0" y1="0" x2="0" y2="1"><stop offset="0" stop-color="#c0c4dc"/><stop offset="0.45" stop-color="#9aa8b8"/><stop offset="1" stop-color="#6e8c98"/></linearGradient>
 <radialGradient id="ffg" cx="0.5" cy="0.5" r="0.5"><stop offset="0" stop-color="#ffd040"/><stop offset="0.6" stop-color="#f07818"/><stop offset="1" stop-color="#d04010"/></radialGradient>
</defs>
<rect x="0" y="931" width="720" height="35" fill="#244a55"/>
<path d="M0 931 L296 931 L310 966 L0 966 Z" fill="#01245a"/>
<path d="M413 931 L484 931 L507 966 L436 966 Z" fill="#01245a"/>
<path d="M530 931 L545 931 L545 966 L540 966 Z" fill="#01245a"/>

<rect x="0" y="931" width="720" height="1" fill="#5e5c88"/><rect x="0" y="932" width="720" height="1" fill="#90a0b0" opacity="0.8"/><rect x="0" y="933" width="720" height="2" fill="#2a5058" opacity="0.7"/>
<!-- buttons -->
<rect x="40.5" y="932.5" width="51" height="33" rx="2" fill="url(#btn)" stroke="#a0b4b4" stroke-width="1"/>
<rect x="542.5" y="932.5" width="46" height="33" rx="2" fill="url(#btn)" stroke="#9ab0b0" stroke-width="1"/>
<rect x="597.5" y="932.5" width="53" height="33" rx="2" fill="url(#btn)" stroke="#9ab0b0" stroke-width="1"/>
<rect x="654.5" y="932.5" width="52" height="33" rx="2" fill="url(#btn2)" stroke="#c0ccd4" stroke-width="1"/>
<path d="M591 934 v30 M594 934 v30" stroke="#5a7070" stroke-width="1"/>
<!-- firefox -->
<circle cx="9" cy="948" r="12.5" fill="#3a6cc8"/>
<circle cx="12" cy="944" r="7" fill="#6aa0e8"/>
<path d="M-3.5 944 Q-1 935 8 935 Q3 937 4 941 Q9 939 13 941 Q9 942 9 945 Q14 948 20 944 Q22 950 19 955 Q14 961 6 961 Q-3 960 -4 950 Z" fill="#e8641a"/>
<path d="M-2 950 Q0 958 8 959 Q15 959 19 954 Q12 957 6 955 Q1 953 -2 950Z" fill="#c84010"/>
<path d="M-3 943 Q0 937 6 936 Q2 940 2 944 Z" fill="#ffb030"/>
<!-- excel -->
<rect x="52.5" y="936.5" width="24" height="24" rx="2" fill="#e4f4e0" stroke="#7ab07a" stroke-width="1"/>
<path d="M55 940 l9 14 M64 940 l-9 14" stroke="#38a038" stroke-width="3.6"/>
<path d="M65 948 l12 2 l-1.5 10 l-12 -2z" fill="#fafffa" stroke="#80a880" stroke-width="0.8"/>
<path d="M66 951 h9 M66 954 h9 M65.5 957 h9" stroke="#a8c8a8" stroke-width="0.8"/>
<!-- word -->
<path d="M110 936 h19 l5 5 v20 h-24z" fill="#f4f8fe" stroke="#8aa0c8" stroke-width="1"/>
<path d="M111 955 h22 v5 h-22z" fill="#c8d8f0"/>
<text x="106.5" y="953" font-family="Liberation Sans" font-weight="bold" font-size="17" fill="#2a5ec0" stroke="#fff" stroke-width="0.6">W</text>
<!-- outlook -->
<path d="M163 936 h25 v25 h-25z" fill="#f8c020" stroke="#d89010" stroke-width="1"/>
<circle cx="172" cy="947" r="6" fill="none" stroke="#fff" stroke-width="3"/>
<circle cx="183" cy="947" r="4.5" fill="#f8f0e0" stroke="#c08020" stroke-width="0.8"/>
<path d="M165 955 l10 -3 l13 6" stroke="#fff4d0" stroke-width="1.5" fill="none"/>
<!-- keepass -->
<circle cx="233" cy="948" r="13" fill="#101828"/>
<circle cx="233" cy="948" r="11" fill="#8cb0f0"/>
<circle cx="233" cy="948" r="9" fill="#6a90e0"/>
<path d="M227 947 v-3 a6 6 0 0 1 12 0 v3" fill="none" stroke="#101828" stroke-width="2.2"/>
<rect x="225" y="947" width="16" height="9" fill="#101828"/>
<path d="M227 950 h12 M227 953 h12" stroke="#8cb0f0" stroke-width="0.8"/>
<!-- chrome -->
<circle cx="288.5" cy="948" r="13" fill="#e04030"/>
<path d="M288.5 948 L277 955 A13 13 0 0 0 297 958 Z" fill="#30a040"/>
<path d="M288.5 948 L297 958 A13 13 0 0 0 301.5 948 L290 941 Z" fill="#f0c020"/>
<path d="M288.5 948 L276 949 A13 13 0 0 0 282 959 Z" fill="#30a040"/>
<circle cx="288.5" cy="948" r="6" fill="#fff"/>
<circle cx="288.5" cy="948" r="4.6" fill="#4a88d8"/>
<!-- teamviewer -->
<path d="M345 935 l9 8 l-9 5 l9 5 l-9 8 l-9 -8 l9 -5 l-9 -5z" fill="#a8dcf4"/>
<rect x="340" y="941" width="10" height="6" fill="#fff" stroke="#303030" stroke-width="1"/>
<rect x="340" y="949" width="10" height="6" fill="#fff" stroke="#303030" stroke-width="1"/>
<path d="M342 946 l3 -3 l3 3z M342 950 l3 3 l3 -3z" fill="#30a0b0"/>
<!-- calculator -->
<rect x="389.5" y="936.5" width="22" height="24" rx="1.5" fill="#b8dcf8" stroke="#7ab0d8" stroke-width="1"/>
<rect x="392" y="939" width="17" height="6" fill="#f0f0ff"/>
<g fill="#5aa0d8"><rect x="392" y="947" width="3" height="2"/><rect x="396.5" y="947" width="3" height="2"/><rect x="401" y="947" width="3" height="2"/><rect x="405.5" y="947" width="3" height="2"/>
<rect x="392" y="951" width="3" height="2"/><rect x="396.5" y="951" width="3" height="2"/><rect x="401" y="951" width="3" height="2"/><rect x="405.5" y="951" width="3" height="2" fill="#f0a030"/>
<rect x="392" y="955" width="3" height="2"/><rect x="396.5" y="955" width="3" height="2"/><rect x="401" y="955" width="3" height="2"/><rect x="405.5" y="955" width="3" height="2" fill="#f0a030"/></g>
<!-- ccleaner -->
<path d="M469 941 A11 11 0 1 0 469 955" fill="none" stroke="#e03028" stroke-width="6"/>
<path d="M460 939 l-8 12" stroke="#3a70c0" stroke-width="2"/>
<path d="M443 955 l6 -6 l6 4 l-4 7 q-5 0 -8 -5z" fill="#f4d090"/>
<!-- DS -->
<path d="M512 935 l14 25 h-18z" fill="#a0c0b0" opacity="0.9"/>
<path d="M498 940 h7 q8 0 8 9 q0 9 -8 9 h-7z" fill="#80c020"/>
<path d="M502 944 h2 q4 0 4 5 q0 5 -4 5 h-2z" fill="#284b54"/>
<text x="511" y="960" font-family="Liberation Sans" font-weight="bold" font-size="12" fill="#70b020">s</text>
<!-- explorer -->
<path d="M549 940 h9 l2 2 h16 v18 h-27z" fill="#f0d070" stroke="#c09830" stroke-width="0.8"/>
<rect x="552" y="937" width="22" height="10" fill="#fff8e0"/>
<circle cx="556" cy="940" r="1.2" fill="#40a040"/><circle cx="560" cy="940" r="1.2" fill="#e04040"/><circle cx="569" cy="942" r="1.2" fill="#3080e0"/>
<path d="M549 946 h27 v14 h-27z" fill="#f8dc80"/>
<path d="M554 952 h17 v6 h-3 v-3 h-11 v3 h-3z" fill="#58b0e8"/>
<!-- db -->
<ellipse cx="623.5" cy="940" rx="10.5" ry="3.2" fill="#d0d0f0"/>
<rect x="613" y="940" width="21" height="17" fill="#a8a8dc"/>
<ellipse cx="623.5" cy="957" rx="10.5" ry="3.2" fill="#a0a0d4"/>
<path d="M613 945.5 q10.5 4 21 0 M613 951 q10.5 4 21 0" stroke="#e4e4fa" stroke-width="1" fill="none"/>
<circle cx="630" cy="955" r="7" fill="#28a828" stroke="#e8f8e8" stroke-width="1"/>
<path d="M626.5 955 l2.8 2.8 l4.5 -5.5" stroke="#fff" stroke-width="2" fill="none"/>
<!-- P -->
<path d="M667 946 Q667 937.5 679 938 Q692 939 692.5 947 Q692 955 679 960.5 Q668 963 667 946Z" fill="#e02828"/>
<path d="M676 956 v-12.5 h5.5 q4.5 0 4.5 4.5 q0 4.5 -4.5 4.5 h-5.5" stroke="#fff" stroke-width="2.8" fill="none"/>
</svg>
<svg style="left:0;top:0" width="720" height="1280">
<path d="M362 386 L362 414.5 L369 408 L374.5 418.5 L378.5 417 L373.8 406.5 L382.5 406 Z" fill="#f8f8f8" stroke="#000" stroke-width="1"/>
</svg>
<svg style="left:0;top:0" width="720" height="1280">
<g transform="translate(71 1237) rotate(45)"><rect x="-30.5" y="-5" width="61" height="10" rx="3" fill="#fff"/><rect x="-5" y="-30.5" width="10" height="61" rx="3" fill="#fff"/></g>
<rect x="189.7" y="1220.2" width="51.5" height="32.6" rx="5" fill="#fff"/>
<g fill="#000"><rect x="196.0" y="1226.3" width="5" height="4"/><rect x="203.9" y="1226.3" width="5" height="4"/><rect x="211.9" y="1226.3" width="5" height="4"/><rect x="219.8" y="1226.3" width="5" height="4"/><rect x="227.9" y="1226.3" width="5" height="4"/><rect x="201.2" y="1234.3" width="5.1" height="4"/><rect x="209.2" y="1234.3" width="5.1" height="4"/><rect x="217.2" y="1234.3" width="5.1" height="4"/><rect x="225.3" y="1234.3" width="5.1" height="4"/><rect x="204.1" y="1242.3" width="23.7" height="3.8"/></g>
<g transform="translate(350 1226) rotate(45)">
<circle r="14.5" fill="#fff"/>
<rect x="0" y="-5" width="45" height="10" rx="5" fill="#fff"/>
<rect x="-26" y="-7.2" width="23.5" height="14.4" fill="#000"/>
<circle cx="39.6" r="3.5" fill="#000"/>
</g>
<path d="M496.81 1219.63 L498.39 1218.64 L499.16 1213.19 L508.84 1213.19 L509.61 1218.64 L511.19 1219.63 L513.01 1220.05 L517.41 1216.74 L524.26 1223.59 L520.95 1227.99 L521.37 1229.81 L522.36 1231.39 L527.81 1232.16 L527.81 1241.84 L522.36 1242.61 L521.37 1244.19 L520.95 1246.01 L524.26 1250.41 L517.41 1257.26 L513.01 1253.95 L511.19 1254.37 L509.61 1255.36 L508.84 1260.81 L499.16 1260.81 L498.39 1255.36 L496.81 1254.37 L494.99 1253.95 L490.59 1257.26 L483.74 1250.41 L487.05 1246.01 L486.63 1244.19 L485.64 1242.61 L480.19 1241.84 L480.19 1232.16 L485.64 1231.39 L486.63 1229.81 L487.05 1227.99 L483.74 1223.59 L490.59 1216.74 L494.99 1220.05Z" fill="#fff" stroke="#fff" stroke-width="1.4" stroke-linejoin="round"/>
<circle cx="504" cy="1237" r="10.7" fill="#000"/><circle cx="504" cy="1237" r="4.6" fill="#fff"/>
<rect x="628" y="1221" width="38" height="8" rx="1.5" fill="#fff"/>
<path d="M628 1233 h38 l-19 22z" fill="#fff"/>
</svg>

</body></html>
